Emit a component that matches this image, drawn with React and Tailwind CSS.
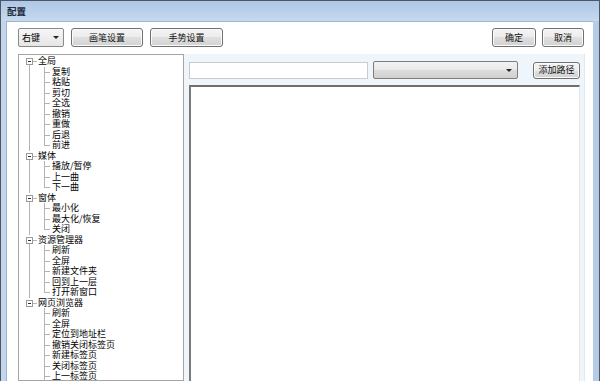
const font = { fontFamily: '"Noto Sans CJK SC", "Noto Sans", sans-serif' }

const tree = [
  ['全局', ['复制', '粘贴', '剪切', '全选', '撤销', '重做', '后退', '前进']],
  ['媒体', ['播放/暂停', '上一曲', '下一曲']],
  ['窗体', ['最小化', '最大化/恢复', '关闭']],
  ['资源管理器', ['刷新', '全屏', '新建文件夹', '回到上一层', '打开新窗口']],
  ['网页浏览器', ['刷新', '全屏', '定位到地址栏', '撤销关闭标签页', '新建标签页', '关闭标签页', '上一标签页', '下一标签页']],
]

const btn =
  'flex items-center justify-center rounded-[3px] border border-[#707070] bg-[linear-gradient(#f4f4f4,#ececec_50%,#dfdfdf_50%,#d2d2d2)] shadow-[inset_0_0_0_1px_#fbfbfb] text-[9px] text-[#111]'

function RootRow({ label, last }) {
  return (
    <div className="relative h-[10.5px] leading-[10.5px] pl-[19px] whitespace-nowrap">
      <span className="absolute left-[7px] top-[2px] w-[7px] h-[7px] border border-[#9a9a9a] bg-white">
        <span className="absolute left-px right-px top-[2px] h-px bg-[#2f2f2f]" />
      </span>
      <span className="absolute left-[14px] top-[5px] w-[4px] border-t border-[#b4b4b4]" />
      {!last && <span className="absolute left-[10px] top-[9px] bottom-0 border-l border-[#b4b4b4]" />}
      {label}
    </div>
  )
}

function ChildRow({ label, last, rootLast }) {
  return (
    <div className="relative h-[10.5px] leading-[10.5px] pl-[33px] whitespace-nowrap">
      {!rootLast && <span className="absolute left-[10px] top-0 bottom-0 border-l border-[#b4b4b4]" />}
      <span
        className={
          last
            ? 'absolute left-[25px] top-0 h-[5px] border-l border-[#b4b4b4]'
            : 'absolute left-[25px] top-0 bottom-0 border-l border-[#b4b4b4]'
        }
      />
      <span className="absolute left-[25px] top-[5px] w-[6px] border-t border-[#b4b4b4]" />
      {label}
    </div>
  )
}

export default function App() {
  return (
    <div
      className="w-[600px] h-[381px] overflow-hidden flex flex-col border-t border-l border-r border-[#4d5866] bg-[#c0d4eb] text-[#000]"
      style={font}
    >
      <div className="h-[20px] shrink-0 flex items-center pl-[6px] bg-[linear-gradient(#adc7e5,#c6d9ee)] text-[9.5px] font-bold text-[#1c2a3a]">
        配置
      </div>

      <div className="flex-1 flex min-h-0">
        <div className="w-[5px] shrink-0 bg-[#c3d6ec]" />

        <div className="flex-1 flex flex-col min-h-0 bg-white border-t border-l border-[#9fb4cf] pl-[11px] pt-[6px]">
          <div className="flex items-center h-[19px] pr-[9px]">
            <div className="w-[46px] h-[19px] flex items-center justify-between rounded-[2px] border border-[#8a8a8a] bg-[linear-gradient(#f6f6f6,#e6e6e6)] pl-[3px] pr-[4px] text-[9px]">
              <span>右键</span>
              <span className="w-0 h-0 border-l-[3px] border-r-[3px] border-t-[3px] border-l-transparent border-r-transparent border-t-[#222]" />
            </div>
            <div className={`${btn} ml-[7px] w-[72px] h-[19px]`}>画笔设置</div>
            <div className={`${btn} ml-[7px] w-[73px] h-[19px]`}>手势设置</div>
            <div className="flex-1" />
            <div className={`${btn} w-[44px] h-[19px]`}>确定</div>
            <div className={`${btn} ml-[6px] w-[42px] h-[19px]`}>取消</div>
          </div>

          <div className="flex flex-1 min-h-0 mt-[7px] pr-[8px]">
            <div className="w-[166px] shrink-0 border border-[#a5a5a5] bg-white pt-px text-[9px] overflow-hidden">
              {tree.map(([root, kids], i) => {
                const rootLast = i === tree.length - 1
                return (
                  <div key={root}>
                    <RootRow label={root} last={rootLast} />
                    {kids.map((k, j) => (
                      <ChildRow key={k + j} label={k} last={j === kids.length - 1} rootLast={rootLast} />
                    ))}
                  </div>
                )
              })}
            </div>

            <div className="flex-1 flex flex-col min-w-0 bg-[#eef5fb] border-r border-[#dfe9f3] pl-[5px] pr-[4px] pt-[7px]">
              <div className="flex items-center">
                <div className="w-[179px] h-[17px] border border-[#c8ccd2] bg-white" />
                <div className="ml-[5px] w-[145px] h-[18px] flex items-center justify-end pr-[5px] rounded-[2px] border border-[#7e7e7e] bg-[linear-gradient(#f2f2f2,#e9e9e9_50%,#dcdcdc_50%,#d0d0d0)]">
                  <span className="w-0 h-0 border-l-[3px] border-r-[3px] border-t-[3px] border-l-transparent border-r-transparent border-t-[#222]" />
                </div>
                <div className="flex-1" />
                <div className={`${btn} w-[47px] h-[17px]`}>添加路径</div>
              </div>
              <div className="flex-1 mt-[6px] bg-white border-t-2 border-l-2 border-t-[#6f6f6f] border-l-[#7a7a7a] border-r border-r-[#e6e6e6]" />
            </div>
          </div>
        </div>

        <div className="w-[6px] shrink-0 bg-[#b6cce6]" />
      </div>
    </div>
  )
}
